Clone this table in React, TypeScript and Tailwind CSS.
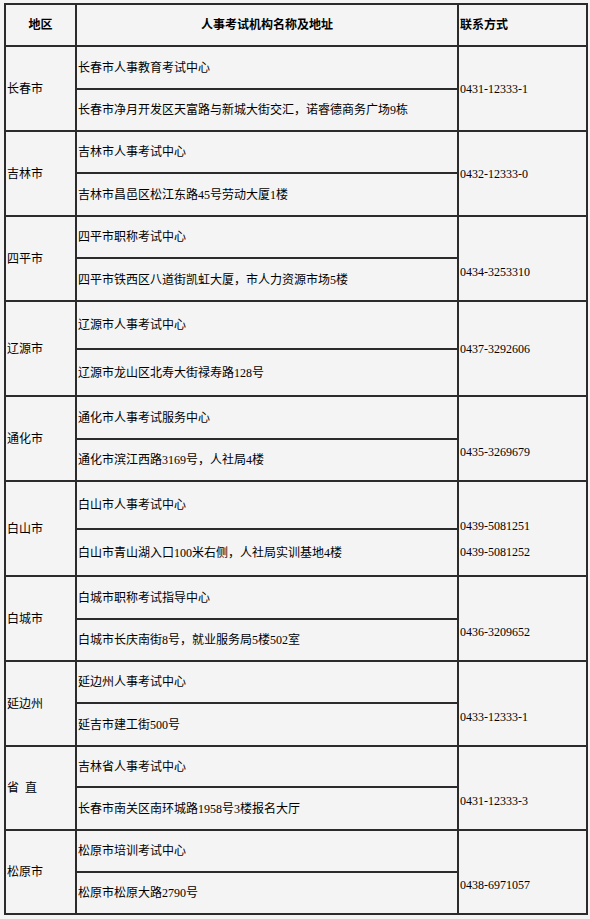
const rows = [
  { city: '长春市', name: '长春市人事教育考试中心', addr: '长春市净月开发区天富路与新城大街交汇，诺睿德商务广场9栋', phones: ['0431-12333-1'], h1: 'h-[43px]', h2: 'h-[42px]', pad: '' },
  { city: '吉林市', name: '吉林市人事考试中心', addr: '吉林市昌邑区松江东路45号劳动大厦1楼', phones: ['0432-12333-0'], h1: 'h-[42px]', h2: 'h-[43px]', pad: '' },
  { city: '四平市', name: '四平市职称考试中心', addr: '四平市铁西区八道街凯虹大厦，市人力资源市场5楼', phones: ['0434-3253310'], h1: 'h-[42px]', h2: 'h-[43px]', pad: 'pt-[26px]' },
  { city: '辽源市', name: '辽源市人事考试中心', addr: '辽源市龙山区北寿大街禄寿路128号', phones: ['0437-3292606'], h1: 'h-[48px]', h2: 'h-[47px]', pad: '' },
  { city: '通化市', name: '通化市人事考试服务中心', addr: '通化市滨江西路3169号，人社局4楼', phones: ['0435-3269679'], h1: 'h-[43px]', h2: 'h-[42px]', pad: 'pt-[26px]' },
  { city: '白山市', name: '白山市人事考试中心', addr: '白山市青山湖入口100米右侧，人社局实训基地4楼', phones: ['0439-5081251', '0439-5081252'], h1: 'h-[48px]', h2: 'h-[47px]', pad: 'pt-[21px]' },
  { city: '白城市', name: '白城市职称考试指导中心', addr: '白城市长庆南街8号，就业服务局5楼502室', phones: ['0436-3209652'], h1: 'h-[43px]', h2: 'h-[42px]', pad: 'pt-[26px]' },
  { city: '延边州', name: '延边州人事考试中心', addr: '延吉市建工街500号', phones: ['0433-12333-1'], h1: 'h-[42px]', h2: 'h-[43px]', pad: 'pt-[26px]' },
  { city: '省\u00a0\u00a0直', name: '吉林省人事考试中心', addr: '长春市南关区南环城路1958号3楼报名大厅', phones: ['0431-12333-3'], h1: 'h-[41px]', h2: 'h-[43px]', pad: 'pt-[26px]' },
  { city: '松原市', name: '松原市培训考试中心', addr: '松原市松原大路2790号', phones: ['0438-6971057'], h1: 'h-[42px]', h2: 'h-[42px]', pad: 'pt-[26px]' },
];

function RegionRow({ city, name, addr, phones, h1, h2, pad }) {
  return (
    <div className="grid grid-cols-[71px_382px_129px]">
      <div className="flex items-center pl-[1px] border-r-2 border-b-2 border-[#2b2b2b]">{city}</div>
      <div className="flex flex-col border-r-2 border-[#2b2b2b]">
        <div className={`${h1} flex items-center pl-[1px] border-b-2 border-[#2b2b2b]`}>{name}</div>
        <div className={`${h2} flex items-center pl-[1px] border-b-2 border-[#2b2b2b]`}>{addr}</div>
      </div>
      <div className="flex items-center pl-[1px] border-r-2 border-b-2 border-[#2b2b2b]">
        <div className={`${pad} leading-[26px]`}>
          {phones.map((p) => (
            <div key={p}>{p}</div>
          ))}
        </div>
      </div>
    </div>
  );
}

export default function App() {
  return (
    <div className="min-h-[919px] w-[590px] bg-[#f4f4f4] pt-[3px] pl-[4px] text-[12px] text-black font-['Liberation_Serif','Noto_Sans_CJK_SC',serif]">
      <div className="w-[584px] border-l-2 border-t-2 border-[#2b2b2b]">
        <div className="grid grid-cols-[71px_382px_129px] h-[42px] font-bold">
          <div className="flex items-center justify-center border-r-2 border-b-2 border-[#2b2b2b]">地区</div>
          <div className="flex items-center justify-center border-r-2 border-b-2 border-[#2b2b2b]">人事考试机构名称及地址</div>
          <div className="flex items-center pl-[1px] border-r-2 border-b-2 border-[#2b2b2b]">联系方式</div>
        </div>
        {rows.map((r) => (
          <RegionRow key={r.name} {...r} />
        ))}
      </div>
    </div>
  );
}
